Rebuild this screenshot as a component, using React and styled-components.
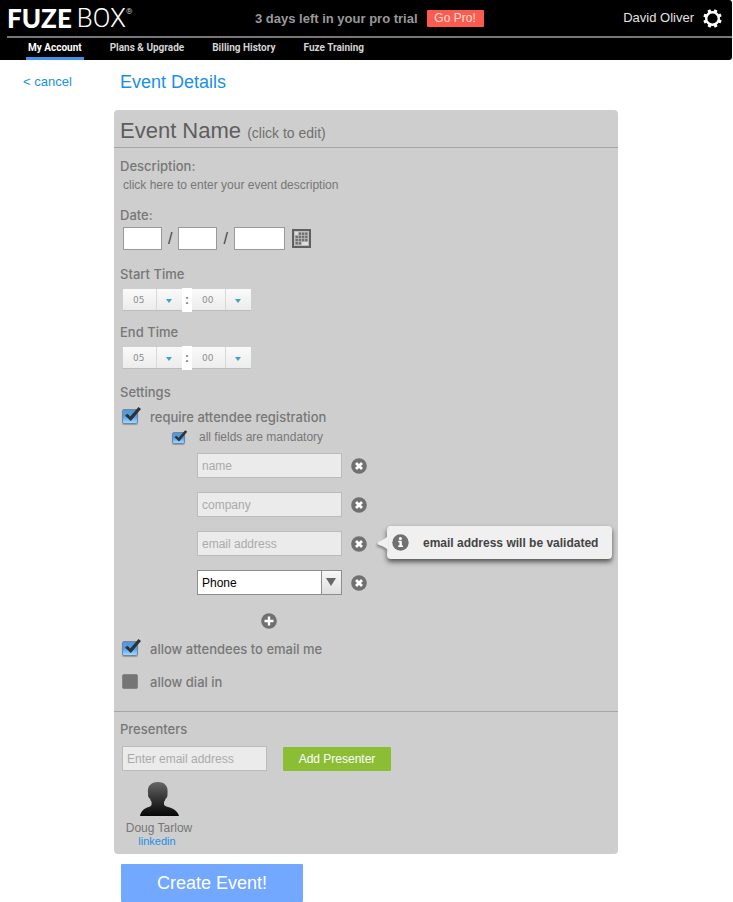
import React from "react";
import styled, { createGlobalStyle, css } from "styled-components";

const GlobalStyle = createGlobalStyle`
  *, *::before, *::after { box-sizing: border-box; }
  body {
    margin: 0;
    background: #ffffff;
    color: #777777;
    font-family: "Liberation Sans", Arial, Helvetica, sans-serif;
    font-size: 14px;
    line-height: 18px;
  }
  h1, h2, h3, p, ul { margin: 0; padding: 0; font-weight: 400; }
  button, input, select { font-family: inherit; margin: 0; }
  button { cursor: pointer; border: 0; padding: 0; background: none; color: inherit; }
  a { color: #1a8fe8; text-decoration: none; }
`;

const labelFont = css`
  font-family: Inter, "Liberation Sans", sans-serif;
  font-size: 13px;
  font-weight: 500;
`;

const Header = styled.header`
  background: #000000;
  border-radius: 0 3px 3px 0;
  margin-right: 1px;
  padding-left: 7px;
`;

const TopBar = styled.div`
  display: flex;
  align-items: center;
  height: 38px;
  padding-right: 10px;
  border-bottom: 2px solid #777777;
`;

const Logo = styled.a`
  display: flex;
  width: 248px;
  color: #ffffff;
  font-family: Roboto, sans-serif;
  font-size: 26px;
  line-height: 40px;
  font-weight: 300;

  strong { margin-right: 5px; font-family: Lato, sans-serif; font-weight: 900; }
  sup { font-size: 8px; line-height: 28px; vertical-align: top; }
`;

const Trial = styled.p`
  color: #999999;
  font-size: 13px;
  font-weight: 700;
  line-height: 20px;
  padding-top: 2px;
`;

const GoPro = styled.button`
  width: 57px;
  height: 17px;
  margin-left: 9px;
  border-radius: 1px;
  background: #ff5a4f;
  color: #ffe0dc;
  font-size: 12px;
  line-height: 16px;
`;

const User = styled.div`
  display: flex;
  align-items: center;
  gap: 9px;
  margin-left: auto;
  color: #e4e4e4;
  font-size: 13px;

  button { height: 19px; }
  svg { display: block; }
`;

const Nav = styled.nav`
  display: flex;
  height: 22px;
  padding-left: 19px;
  gap: 24px;
`;

const NavLink = styled.a`
  padding: 0 2px;
  border-bottom: 3px solid ${(p) => (p.$active ? "#3f92ee" : "transparent")};
  color: ${(p) => (p.$active ? "#ffffff" : "#d4d4d4")};
  font-family: Roboto, sans-serif;
  font-size: 10px;
  font-weight: 700;
  line-height: 20px;
`;

const Page = styled.main`
  display: grid;
  grid-template-columns: 114px minmax(0, 1fr);
  padding-right: 115px;
`;

const Cancel = styled.a`
  padding: 13px 0 0 23px;
  font-size: 13px;
`;

const PageTitle = styled.h1`
  padding: 10px 0 0 6px;
  height: 50px;
  color: #1a8fe8;
  font-size: 18px;
  line-height: 24px;
`;

const Content = styled.div`
  grid-column: 2;
`;

const Panel = styled.section`
  background: #cecece;
  border-radius: 4px;
`;

const NameBar = styled.h2`
  height: 38px;
  padding-left: 6px;
  border-bottom: 1px solid #a6a6a6;
  color: #5e5e5e;
  font-size: 22px;
  line-height: 42px;

  small { color: #707070; font-size: 14px; }
`;

const Body = styled.div`
  display: flex;
  flex-direction: column;
  padding: 9px 6px 19px;
  border-bottom: 1px solid #a6a6a6;
`;

const Group = styled.fieldset`
  min-width: 0;
  margin: 0;
  padding: 0 0 ${(p) => p.$after || 0}px;
  border: 0;
`;

const Legend = styled.legend`
  display: block;
  padding: 0;
  ${labelFont}
  line-height: 18px;
`;

const DescriptionText = styled.button`
  display: block;
  height: 18px;
  margin-top: 1px;
  padding-left: 3px;
  font-size: 12px;
`;

const Row = styled.div`
  display: flex;
  align-items: center;
  gap: ${(p) => p.$gap || 0}px;
`;

const DateRow = styled(Row)`
  padding: 3px 0 0 3px;
  color: #444444;
  font-size: 16px;
`;

const DateInput = styled.input`
  width: ${(p) => (p.$year ? 51 : 39)}px;
  height: 23px;
  padding: 0 4px;
  border: 1px solid #999999;
  background: #ffffff;
  color: #333333;
  font-size: 12px;
`;

const CalendarButton = styled.button`
  margin-left: 1px;
  svg { display: block; }
`;

const TimeRow = styled(Row)`
  padding: 5px 0 0 3px;
`;

const TimePick = styled.div`
  position: relative;

  svg { position: absolute; right: 10px; top: 10px; pointer-events: none; }
`;

const TimeSelect = styled.select`
  display: block;
  appearance: none;
  width: 59px;
  height: 22px;
  padding: 0 0 0 10px;
  border: 0;
  border-bottom: 1px solid #bdbdbd;
  border-radius: 0;
  background: linear-gradient(#d8d8d8, #d8d8d8) 33px 0 / 1px 100% no-repeat,
    linear-gradient(#fafafa, #ececec);
  color: #8d8d8d;
  font-family: "DejaVu Sans", sans-serif;
  font-size: 9px;
`;

const Colon = styled.span`
  width: 10px;
  height: 24px;
  background: #ffffff;
  color: #777777;
  font-size: 12px;
  font-weight: 700;
  line-height: 24px;
  text-align: center;
`;

const CheckLabel = styled.label`
  display: flex;
  align-items: center;
  gap: ${(p) => (p.$small ? 11 : 7)}px;
  height: 20px;
  padding-left: ${(p) => (p.$small ? 52 : 2)}px;
  ${(p) => (p.$small ? "font-size: 12px;" : labelFont)}
`;

const CheckBoxWrap = styled.span`
  position: relative;
  flex: none;
  width: ${(p) => (p.$small ? 16 : 21)}px;
  height: ${(p) => (p.$small ? 15 : 20)}px;

  input {
    display: block;
    appearance: none;
    width: ${(p) => (p.$small ? 13 : 16)}px;
    height: ${(p) => (p.$small ? 12 : 15)}px;
    margin-top: 2px;
    border: 1px solid #858585;
    border-radius: 2px;
    background: #757575;
  }
  input:checked {
    border-color: #6d87a3;
    background: linear-gradient(#5796d6, #51a0e8 50%, #a5d8fb);
    box-shadow: 0 1px 1px #999999;
  }
  svg { position: absolute; left: 0; top: 0; pointer-events: none; }
  input:not(:checked) + svg { display: none; }
`;

const Settings = styled.div`
  padding-top: 6px;
`;

const FieldList = styled.ul`
  display: flex;
  flex-direction: column;
  gap: 14px;
  padding: 6px 0 0 77px;
  list-style: none;
`;

const FieldRow = styled.li`
  position: relative;
  display: flex;
  align-items: center;
  gap: 9px;
`;

const fieldBox = css`
  display: block;
  width: 145px;
  height: 25px;
  padding: 0 4px;
  border-radius: 0;
  font-size: 12px;
`;

const TextInput = styled.input`
  ${fieldBox}
  border: 1px solid #bbbbbb;
  background: #ebebeb;
  &::placeholder { color: #aaaaaa; opacity: 1; }
`;

const TypePick = styled.div`
  position: relative;
  svg { position: absolute; right: 6px; top: 8px; pointer-events: none; }
`;

const TypeSelect = styled.select`
  ${fieldBox}
  appearance: none;
  border: 1px solid #8d8d8d;
  background: linear-gradient(#8d8d8d, #8d8d8d) 123px 0 / 1px 100% no-repeat,
    linear-gradient(#f7f7f7, #dfdfdf) 124px 0 / 20px 100% no-repeat, #ffffff;
  color: #000000;
`;

const RoundButton = styled.button`
  width: 16px;
  height: 16px;
  svg { display: block; }
`;

const AddRow = styled.div`
  display: flex;
  height: 44px;
  padding: 18px 0 0 141px;
`;

const Tooltip = styled.div`
  position: absolute;
  left: 190px;
  top: -5px;
  display: flex;
  align-items: center;
  gap: 14px;
  width: 225px;
  height: 33px;
  padding-left: 5px;
  border-radius: 4px;
  background: #f0f0f0;
  box-shadow: 0 3px 5px #555555;
  color: #444444;
  font-size: 12px;
  font-weight: 700;
  white-space: nowrap;

  svg { flex: none; }
`;

const TooltipTail = styled.svg`
  position: absolute;
  left: -10px;
  top: 10px;
  filter: drop-shadow(-1px 2px 1px #888888);
`;

const Stack = styled.div`
  display: flex;
  flex-direction: column;
  gap: 13px;
`;

const Presenters = styled.div`
  padding: 8px 6px 7px;
`;

const InviteRow = styled(Row)`
  padding: 8px 0 0 2px;
`;

const AddPresenter = styled.button`
  width: 108px;
  height: 24px;
  border-radius: 1px;
  background: #8cbe35;
  color: #ffffff;
  font-size: 12px;
`;

const Person = styled.figure`
  display: flex;
  flex-direction: column;
  align-items: center;
  width: 78px;
  margin: 11px 0 0;
  font-size: 12px;
  line-height: 14px;

  svg { display: block; margin: 0 0 5px; }
  a { font-size: 11px; line-height: 12px; margin-right: 4px; }
  figcaption { white-space: nowrap; }
`;

const Create = styled.button`
  display: block;
  width: 182px;
  height: 38px;
  margin: 10px 0 0 7px;
  border-radius: 1px;
  background: #72a8ff;
  color: #ffffff;
  font-size: 18px;
`;

const gearTeeth = [0, 45, 90, 135, 180, 225, 270, 315];

function GearIcon() {
  return (
    <svg width="19" height="19" viewBox="0 0 19 19" fill="#ffffff">
      <circle cx="9.5" cy="9.5" r="6.3" fill="none" stroke="#ffffff" strokeWidth="2.4" />
      {gearTeeth.map((a) => (
        <path key={a} d="M7.7 2.8 8 .2h3l.3 2.6z" transform={`rotate(${a + 22} 9.5 9.5)`} />
      ))}
    </svg>
  );
}

function CalendarIcon() {
  const cells = [];
  for (let r = 0; r < 4; r++) {
    for (let c = 0; c < 4; c++) {
      if (r === 0 && c === 0) continue;
      if (r === 3 && c > 1) continue;
      cells.push(<rect key={`${r}-${c}`} x={3.5 + c * 3.2} y={3.5 + r * 3.2} width="2.4" height="2.4" />);
    }
  }
  return (
    <svg width="19" height="19" viewBox="0 0 19 19" fill="#707070">
      <rect width="19" height="19" fill="#606060" />
      <rect x="2" y="2" width="15" height="15" fill="#bdbdbd" />
      <path d="M3 3h3v3H3zM10 13h6v3h-6z" fill="#dedede" />
      {cells}
    </svg>
  );
}

function Arrow({ width, height, color }) {
  return (
    <svg width={width} height={height} viewBox="0 0 10 8" preserveAspectRatio="none">
      <path d="M0 0h10L5 8z" fill={color} />
    </svg>
  );
}

function CloseIcon() {
  return (
    <svg width="16" height="16" viewBox="0 0 16 16">
      <circle cx="8" cy="8" r="7.8" fill="#707070" />
      <path d="M5 5l6 6M11 5l-6 6" stroke="#ffffff" strokeWidth="2.8" />
    </svg>
  );
}

function PlusIcon() {
  return (
    <svg width="16" height="16" viewBox="0 0 16 16">
      <circle cx="8" cy="8" r="7.8" fill="#707070" />
      <path d="M8 3.5v9M3.5 8h9" stroke="#ffffff" strokeWidth="2.4" />
    </svg>
  );
}

function InfoIcon() {
  return (
    <svg width="17" height="17" viewBox="0 0 17 17">
      <circle cx="8.5" cy="8.5" r="8.2" fill="#707070" />
      <circle cx="8.4" cy="4.4" r="1.5" fill="#ffffff" />
      <path d="M6.2 6.8h3.6v4.8H11V13H6.2v-1.4h1.2V8.2H6.2z" fill="#ffffff" />
    </svg>
  );
}

function PersonIcon() {
  return (
    <svg width="39" height="34" viewBox="0 0 39 34">
      <defs>
        <linearGradient id="person" x1="0" y1="0" x2="0" y2="1">
          <stop offset="0" stopColor="#666666" />
          <stop offset="0.65" stopColor="#252525" />
          <stop offset="1" stopColor="#080808" />
        </linearGradient>
      </defs>
      <path
        fill="url(#person)"
        d="M0 34c1-5 4-7.500 8-8.800 2.200-.700 3.200-1.200 3.600-2.700V20c-.900-.900-1.300-2-1.500-3.200-1.600-.500-2.300-3-2-5.300C7 4 11 0 18 0s10.500 4.500 9.500 11.500c.300 2.300-.600 4.800-2 5.300-.200 1.200-.700 2.300-1.500 3.200v2.500c.500 1.200 1.700 1.800 4 2.500 5 1.500 9.500 3.500 11 9z"
      />
    </svg>
  );
}

function CheckBox({ label, small, checked }) {
  return (
    <CheckLabel $small={small}>
      <CheckBoxWrap $small={small}>
        <input type="checkbox" defaultChecked={checked} />
        <svg width={small ? 16 : 20} height={small ? 14 : 17} viewBox="0 0 20 17">
          <path d="M3 8.500 5.600 6.800 8.200 9.500 16.500 0 19 2 8.800 14z" fill="#2d3339" />
        </svg>
      </CheckBoxWrap>
      {label}
    </CheckLabel>
  );
}

function TimePicker({ label, value }) {
  return (
    <TimePick>
      <TimeSelect aria-label={label} defaultValue={value}>
        <option>{value}</option>
      </TimeSelect>
      <Arrow width={6} height={4} color="#3fa3c9" />
    </TimePick>
  );
}

function TimeGroup({ title, after }) {
  return (
    <Group $after={after}>
      <Legend>{title}</Legend>
      <TimeRow>
        <TimePicker label={`${title} hour`} value="05" />
        <Colon>:</Colon>
        <TimePicker label={`${title} minute`} value="00" />
      </TimeRow>
    </Group>
  );
}

function RemoveButton({ name }) {
  return (
    <RoundButton type="button" aria-label={`Remove ${name}`}>
      <CloseIcon />
    </RoundButton>
  );
}

export default function App() {
  return (
    <>
      <GlobalStyle />
      <Header>
        <TopBar>
          <Logo href="#">
            <strong>FUZE</strong>BOX<sup>®</sup>
          </Logo>
          <Trial>3 days left in your pro trial</Trial>
          <GoPro type="button">Go Pro!</GoPro>
          <User>
            David Oliver
            <button type="button" aria-label="Account settings">
              <GearIcon />
            </button>
          </User>
        </TopBar>
        <Nav>
          <NavLink href="#" $active>My Account</NavLink>
          <NavLink href="#">Plans &amp; Upgrade</NavLink>
          <NavLink href="#">Billing History</NavLink>
          <NavLink href="#">Fuze Training</NavLink>
        </Nav>
      </Header>

      <Page>
        <Cancel href="#">&lt; cancel</Cancel>
        <PageTitle>Event Details</PageTitle>
        <Content>
          <Panel>
            <NameBar>
              Event Name <small>(click to edit)</small>
            </NameBar>
            <Body>
              <Group $after={12}>
                <Legend>Description:</Legend>
                <DescriptionText type="button">click here to enter your event description</DescriptionText>
              </Group>
              <Group $after={15}>
                <Legend>Date:</Legend>
                <DateRow $gap={6}>
                  <DateInput aria-label="Month" />
                  <span>/</span>
                  <DateInput aria-label="Day" />
                  <span>/</span>
                  <DateInput aria-label="Year" $year />
                  <CalendarButton type="button" aria-label="Open calendar">
                    <CalendarIcon />
                  </CalendarButton>
                </DateRow>
              </Group>
              <TimeGroup title="Start Time" after={11} />
              <TimeGroup title="End Time" after={13} />
              <Group>
                <Legend>Settings</Legend>
                <Settings>
                  <CheckBox label="require attendee registration" checked />
                  <CheckBox label="all fields are mandatory" small checked />
                  <FieldList>
                    <FieldRow>
                      <TextInput placeholder="name" aria-label="name" />
                      <RemoveButton name="name" />
                    </FieldRow>
                    <FieldRow>
                      <TextInput placeholder="company" aria-label="company" />
                      <RemoveButton name="company" />
                    </FieldRow>
                    <FieldRow>
                      <TextInput placeholder="email address" aria-label="email address" />
                      <RemoveButton name="email address" />
                      <Tooltip role="tooltip">
                        <TooltipTail width="11" height="14" viewBox="0 0 11 14">
                          <path d="M11 0C8 3 5 4 2 5.500 0 6.500 0 8 2 9c3 1.200 6 2 9 5z" fill="#f0f0f0" />
                        </TooltipTail>
                        <InfoIcon />
                        email address will be validated
                      </Tooltip>
                    </FieldRow>
                    <FieldRow>
                      <TypePick>
                        <TypeSelect aria-label="Field type" defaultValue="Phone">
                          <option>Phone</option>
                        </TypeSelect>
                        <Arrow width={10} height={8} color="#666666" />
                      </TypePick>
                      <RemoveButton name="Phone" />
                    </FieldRow>
                  </FieldList>
                  <AddRow>
                    <RoundButton type="button" aria-label="Add field">
                      <PlusIcon />
                    </RoundButton>
                  </AddRow>
                  <Stack>
                    <CheckBox label="allow attendees to email me" checked />
                    <CheckBox label="allow dial in" />
                  </Stack>
                </Settings>
              </Group>
            </Body>
            <Presenters>
              <Legend as="h3">Presenters</Legend>
              <InviteRow $gap={16}>
                <TextInput type="email" placeholder="Enter email address" aria-label="Presenter email address" />
                <AddPresenter type="button">Add Presenter</AddPresenter>
              </InviteRow>
              <Person>
                <PersonIcon />
                <figcaption>Doug Tarlow</figcaption>
                <a href="#">linkedin</a>
              </Person>
            </Presenters>
          </Panel>
          <Create type="button">Create Event!</Create>
        </Content>
      </Page>
    </>
  );
}
